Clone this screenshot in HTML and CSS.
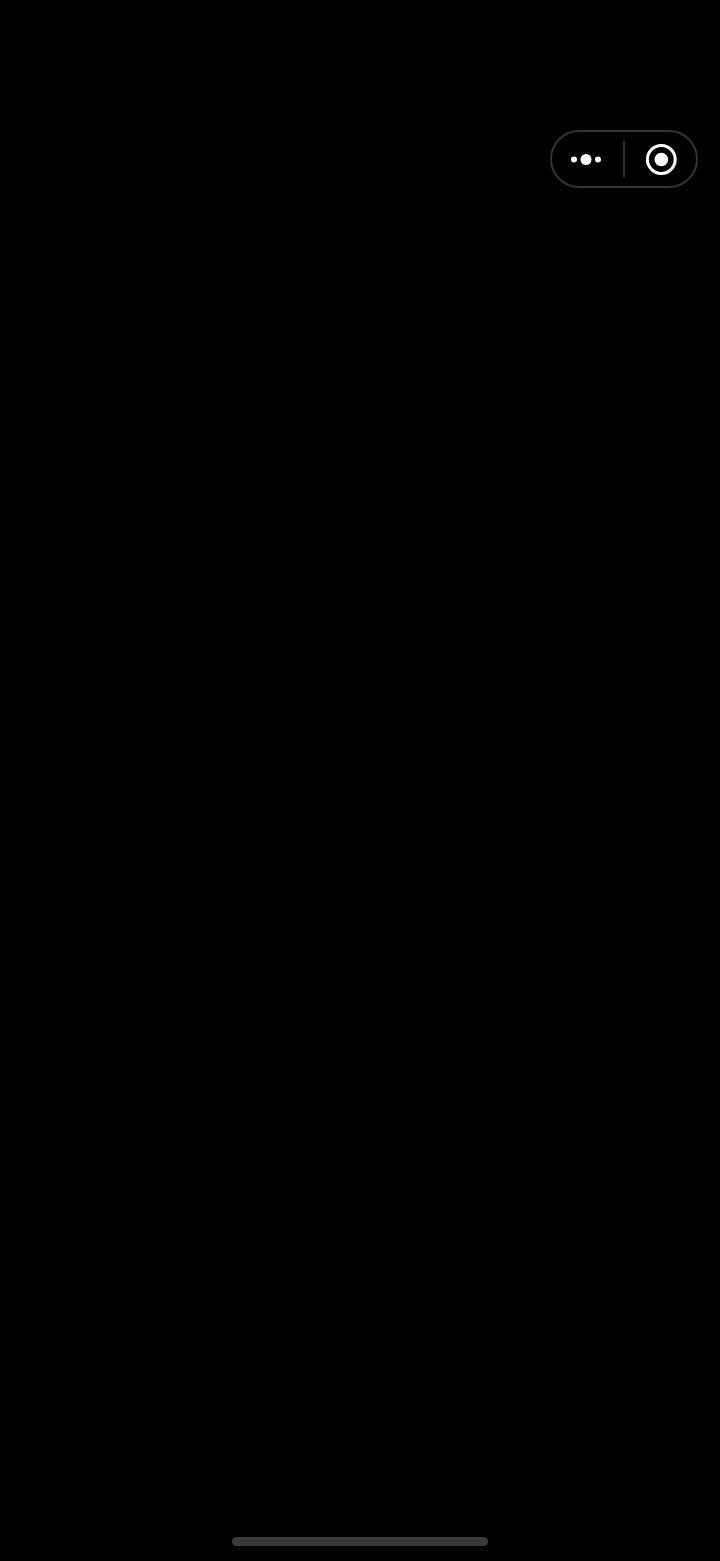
FILE: index.html
```html
<!DOCTYPE html>
<html lang="en">
<head>
    <meta charset="UTF-8">
    <meta name="viewport" content="width=device-width, initial-scale=1.0">
    <title>Mini program</title>
    <link rel="stylesheet" href="styles.css">
</head>
<body>
    <div class="capsule">
        <div class="capsule-btn">
            <svg class="icon-more" width="32" height="12" viewBox="0 0 32 12">
                <circle cx="4" cy="6.5" r="3" fill="#fff"/>
                <circle cx="16" cy="6.5" r="5.5" fill="#fff"/>
                <circle cx="28" cy="6.5" r="3" fill="#fff"/>
            </svg>
        </div>
        <div class="capsule-line"></div>
        <div class="capsule-btn">
            <svg class="icon-close" width="32" height="32" viewBox="0 0 32 32">
                <circle cx="16.3" cy="16.5" r="13.9" fill="none" stroke="#fff" stroke-width="3"/>
                <circle cx="16.3" cy="16.5" r="6.8" fill="#fff"/>
            </svg>
        </div>
    </div>
    <div class="home-bar"></div>
</body>
</html>
```

FILE: styles.css
```css
html, body {
    height: 100%;
}
body {
    margin: 0;
    background-color: #000;
    display: flex;
    flex-direction: column;
    box-sizing: border-box;
    padding-top: 130px;
    padding-bottom: 15px;
}
.capsule {
    align-self: flex-end;
    margin-right: 22px;
    width: 148px;
    height: 58px;
    box-sizing: border-box;
    border: 2px solid #333;
    border-radius: 29px;
    display: flex;
    align-items: center;
}
.capsule-btn {
    flex: 1;
    display: flex;
    justify-content: center;
    align-items: center;
}
.icon-more {
    margin-right: 4px;
}
.capsule-line {
    width: 2px;
    height: 36px;
    background-color: #333;
}
.home-bar {
    align-self: center;
    margin-top: auto;
    width: 256px;
    height: 9px;
    border-radius: 5px;
    background-color: #3a3a3a;
}
```
